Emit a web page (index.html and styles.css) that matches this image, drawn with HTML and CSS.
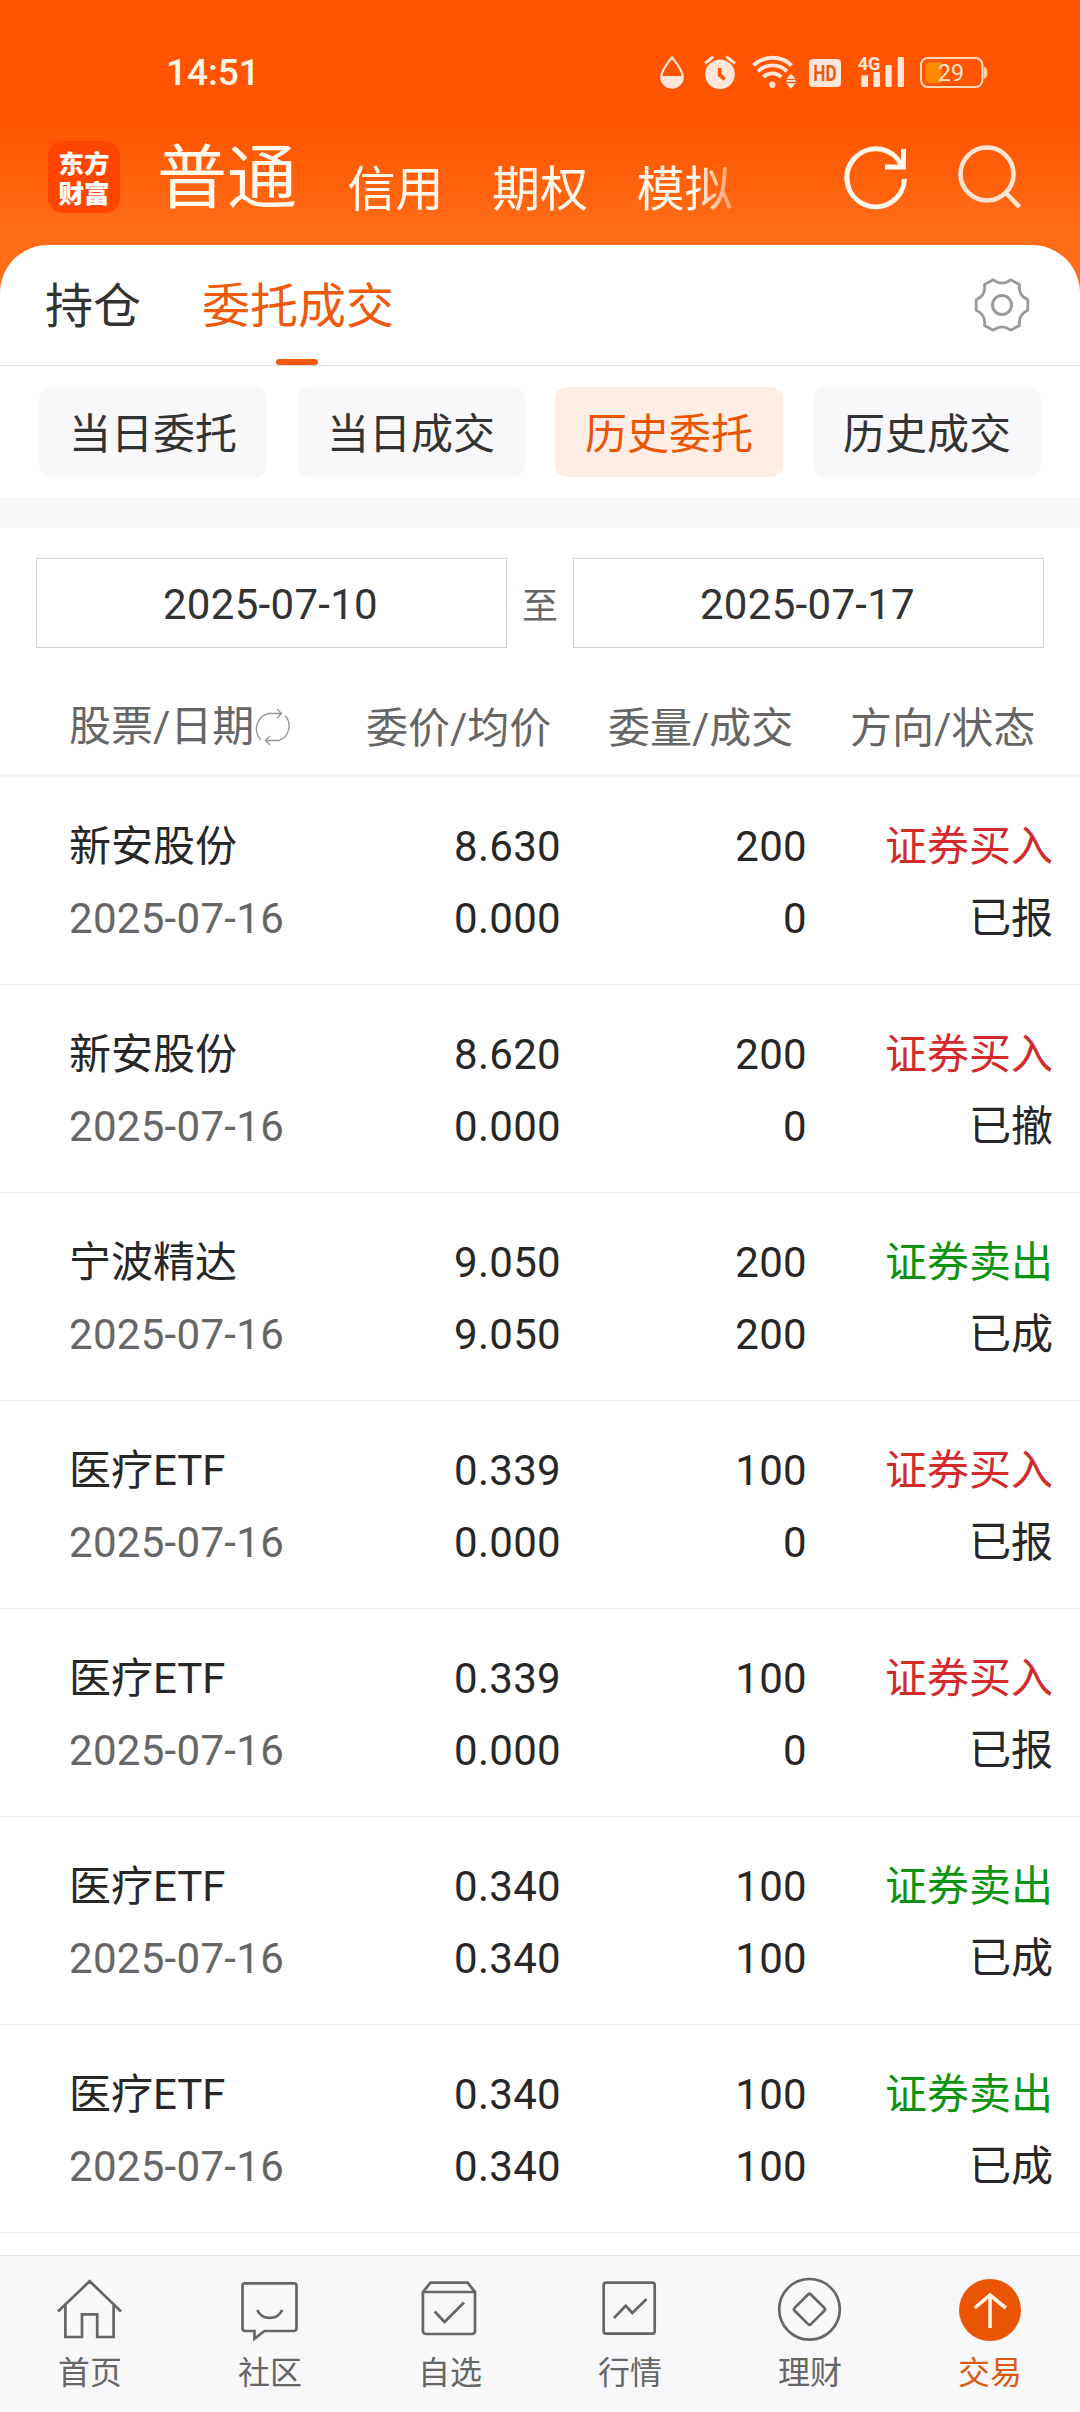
FILE: index.html
```html
<!DOCTYPE html>
<html lang="zh-CN">
<head>
<meta charset="utf-8">
<title>历史委托</title>
<link rel="stylesheet" href="styles.css">
</head>
<body>
<div class="app">
  <header class="top">
    <div class="statusbar">
      <span class="clock">14:51</span>
      <div class="status-icons">
        <svg width="30" height="36" viewBox="57 42 90 108"><path d="M96 52C86 67 64 88 64 111a32 32 0 0 0 64 0C128 88 106 67 96 52Z" fill="none" stroke="#ffe6d9" stroke-width="6.500"/><path d="M64 108h64a32 34 0 0 1-64 0Z" fill="#ffe6d9"/></svg>
        <svg width="36" height="36" viewBox="183 42 108 108"><circle cx="240" cy="103" r="44.500" fill="#ffe6d9"/><path d="M195 70l25-20M259 50l26 20" stroke="#ffe6d9" stroke-width="9"/><path d="M239 84v21l15 13" fill="none" stroke="#ff5500" stroke-width="11"/></svg>
        <svg width="47" height="36" viewBox="327 42 141 108"><g fill="none" stroke="#ffe6d9" stroke-width="11.500"><path d="M340 76a84 84 0 0 1 115 0"/><path d="M354 94a62 62 0 0 1 87 0"/><path d="M370 111a39 39 0 0 1 54 0"/></g><circle cx="397" cy="134" r="9.500" fill="#ffe6d9"/><path d="M453 101l14 16h-28ZM453 146l14-17h-28ZM439 120h28v5h-28Z" fill="#ffe6d9"/></svg>
        <svg width="37" height="36" viewBox="504 42 111 108"><rect x="507" y="57" width="96" height="84" rx="12" fill="#ffe6d9"/><text x="555" y="122" class="hd" text-anchor="middle" textLength="70" lengthAdjust="spacingAndGlyphs">HD</text></svg>
        <svg width="50" height="36" viewBox="651 42 150 108"><text x="653" y="91" class="net" textLength="68" lengthAdjust="spacingAndGlyphs">4G</text><g fill="#ffe6d9"><rect x="664" y="106" width="20" height="35" rx="3"/><rect x="700" y="96" width="20" height="45" rx="3"/><rect x="736" y="75" width="19" height="66" rx="3"/><rect x="773" y="51" width="19" height="90" rx="3"/></g></svg>
        <svg width="69" height="36" viewBox="837 42 207 108"><rect x="843" y="54" width="184" height="87" rx="20" fill="none" stroke="#ffd9b8" stroke-width="6"/><path d="M870 66h34v63h-34a15 15 0 0 1-15-15V81a15 15 0 0 1 15-15Z" fill="#ff8a00"/><path d="M1032 81a9 17 0 0 1 0 34Z" fill="#ffd0a8" stroke="#ffd0a8" stroke-width="3"/><text x="933" y="123" class="batt" text-anchor="middle" textLength="78" lengthAdjust="spacingAndGlyphs">29</text></svg>
      </div>
    </div>
    <div class="navbar">
      <div class="logo"><span>东方</span><span>财富</span></div>
      <nav class="accounts">
        <span class="current">普通</span><span>信用</span><span>期权</span><span>模拟</span>
      </nav>
      <svg class="refresh" width="72" height="72" viewBox="840 141 72 72" fill="none" stroke="#fff8ec" stroke-width="5"><path d="M904.500 179A28.800 29 0 1 1 902 166"/><path d="M903.500 149v18H885"/></svg>
      <svg class="search" width="72" height="72" viewBox="954 141 72 72" fill="none" stroke="#ffe4d2" stroke-width="4.600"><circle cx="987" cy="174" r="26.500"/><path d="M1005 192l14.500 15"/></svg>
    </div>
  </header>

  <main class="sheet">
    <div class="tabs">
      <span class="tab">持仓</span>
      <span class="tab active">委托成交</span>
      <svg class="gear" width="60" height="60" viewBox="-30 -30 60 60" fill="none" stroke="#999" stroke-linejoin="round"><path stroke-width="2.800" d="M-8.700-25.200Q0-18.500 8.700-25.200L17.500-20.400Q16-9.600 25.800-5.300V5.300Q16 9.600 17.500 20.400L8.700 25.200Q0 18.500-8.700 25.200L-17.500 20.400Q-16 9.600-25.800 5.300V-5.300Q-16-9.600-17.500-20.400Z"/><circle r="9.500" stroke-width="3"/></svg>
    </div>
    <div class="chips">
      <span class="chip">当日委托</span><span class="chip">当日成交</span><span class="chip on">历史委托</span><span class="chip">历史成交</span>
    </div>
    <div class="range">
      <span class="date">2025-07-10</span><span class="to">至</span><span class="date">2025-07-17</span>
    </div>
    <div class="thead">
      <span class="sortable">股票/日期<svg width="38" height="38" viewBox="0 0 38 38" fill="none" stroke="#999" stroke-width="1.400"><path d="M7 32A16 16 0 0 1 14 5.500H27M23 1l4.500 4.500L23 10M31 7.500A15.500 15.500 0 0 1 25 32.500H12M16 28l-4.500 4.500L16 37"/></svg></span>
      <span>委价/均价</span><span>委量/成交</span><span>方向/状态</span>
    </div>
    <div class="rows">
      <div class="row"><div>新安股份<br><i>2025-07-16</i></div><div>8.630<br>0.000</div><div>200<br>0</div><div><b class="buy">证券买入</b><br>已报</div></div>
      <div class="row"><div>新安股份<br><i>2025-07-16</i></div><div>8.620<br>0.000</div><div>200<br>0</div><div><b class="buy">证券买入</b><br>已撤</div></div>
      <div class="row"><div>宁波精达<br><i>2025-07-16</i></div><div>9.050<br>9.050</div><div>200<br>200</div><div><b class="sell">证券卖出</b><br>已成</div></div>
      <div class="row"><div>医疗ETF<br><i>2025-07-16</i></div><div>0.339<br>0.000</div><div>100<br>0</div><div><b class="buy">证券买入</b><br>已报</div></div>
      <div class="row"><div>医疗ETF<br><i>2025-07-16</i></div><div>0.339<br>0.000</div><div>100<br>0</div><div><b class="buy">证券买入</b><br>已报</div></div>
      <div class="row"><div>医疗ETF<br><i>2025-07-16</i></div><div>0.340<br>0.340</div><div>100<br>100</div><div><b class="sell">证券卖出</b><br>已成</div></div>
      <div class="row"><div>医疗ETF<br><i>2025-07-16</i></div><div>0.340<br>0.340</div><div>100<br>100</div><div><b class="sell">证券卖出</b><br>已成</div></div>
    </div>
  </main>

  <nav class="tabbar">
    <a><svg viewBox="0 0 72 72"><path d="M4 37.500L35.700 7.200L67 37.500M11.400 31.500V63H28V40.300H43.200V63H59.600V31.500"/></svg>首页</a>
    <a><svg viewBox="0 0 72 72"><path d="M11 9.300H60a2.500 2.500 0 0 1 2.500 2.500V54.500A2.500 2.500 0 0 1 60 57H30.500L20.500 64.700V57H11a2.500 2.500 0 0 1-2.500-2.500V11.800A2.500 2.500 0 0 1 11 9.300Z"/><path d="M23.200 36a13.800 13.800 0 0 0 25 0"/></svg>社区</a>
    <a><svg viewBox="0 0 72 72"><path d="M8.900 18L16.500 8.700H53.600L61 18V57a3 3 0 0 1-3 3H11.900a3 3 0 0 1-3-3ZM8.900 18H61M20.700 37.500L30.600 48L50 28.500"/></svg>自选</a>
    <a><svg viewBox="0 0 72 72"><rect x="9.700" y="8.700" width="51" height="51" rx="2.500"/><path d="M20 44L31.700 31.700L38.300 39L52.600 25"/></svg>行情</a>
    <a><svg viewBox="0 0 72 72"><circle cx="35.500" cy="35.300" r="30.300"/><rect x="24" y="23.800" width="23" height="23" rx="2" transform="rotate(45 35.500 35.300)"/></svg>理财</a>
    <a class="active"><svg viewBox="0 0 72 72"><circle class="disc" cx="36" cy="36" r="31"/><path class="arrow" d="M36 54V21M20.700 34L36 21L51.800 34"/></svg>交易</a>
  </nav>
</div>
</body>
</html>
```

FILE: styles.css
```css
* { box-sizing: border-box; }
body {
  margin: 0;
  width: 1080px;
  font-family: Roboto, "Noto Sans CJK SC", sans-serif;
  color: #333;
  background: #fff;
}
.app {
  display: flex;
  flex-direction: column;
  height: 2412px;
  overflow: hidden;
  background: linear-gradient(#ff5500 0, #ff5500 125px, #ff6c17 230px, #ff701c 300px);
}
svg { display: block; flex: none; }

.top { height: 245px; flex: none; }
.statusbar {
  display: flex;
  justify-content: space-between;
  align-items: center;
  height: 144px;
  padding: 0 92px 0 166px;
}
.clock {
  color: #fff6e6;
  font: 500 37px/1 Roboto, sans-serif;
}
.status-icons { display: flex; gap: 12px; }
.hd { font: 700 65px Roboto, sans-serif; fill: #e65a14; }
.net { font: 700 56px Roboto, sans-serif; fill: #ffe6d9; }
.batt { font: 400 74px Roboto, sans-serif; fill: #ffe2c8; }

.navbar {
  display: flex;
  height: 72px;
  margin-top: -3px;
  padding-left: 48px;
}
.logo {
  display: flex;
  flex-direction: column;
  justify-content: center;
  width: 72px;
  height: 72px;
  border-radius: 15px;
  background: #ff4600;
  color: #fff;
  font: 900 25.500px/30px "Noto Sans CJK SC", sans-serif;
  text-align: center;
}
.accounts {
  display: flex;
  align-items: flex-start;
  gap: 48.500px;
  width: 630px;
  height: 100px;
  margin-left: 37px;
  color: #fff8ec;
  font-size: 48px;
  line-height: 97px;
  -webkit-mask-image: linear-gradient(90deg, #000 538px, transparent 600px);
  mask-image: linear-gradient(90deg, #000 538px, transparent 600px);
}
.accounts .current {
  margin-right: 2px;
  font-size: 70px;
  line-height: 76px;
}
.refresh { margin-left: 53px; }
.search { margin-left: 42px; }

.sheet {
  flex: 1;
  background: #fff;
  border-radius: 48px 48px 0 0;
}
.tabs {
  display: flex;
  align-items: center;
  height: 121px;
  padding: 0 48px 0 45px;
  border-bottom: 1px solid #ddd;
  font-size: 48px;
}
.tab {
  height: 120px;
  margin-right: 61px;
  line-height: 124px;
}
.tab.active { position: relative; color: #ed5a0c; }
.tab.active::after {
  content: "";
  position: absolute;
  left: 74px;
  bottom: 0;
  width: 42px;
  height: 6px;
  border-radius: 3px;
  background: #f35a0c;
}
.gear { margin-left: auto; }

.chips {
  display: flex;
  gap: 30px;
  height: 131px;
  padding: 21px 39px 20px;
}
.chip {
  flex: 1;
  height: 90px;
  border-radius: 12px;
  background: #f8f8fa;
  font-size: 42px;
  line-height: 95px;
  text-align: center;
}
.chip.on { background: #ffeee5; color: #ea5504; }

.range {
  display: flex;
  align-items: center;
  justify-content: space-between;
  height: 182px;
  padding: 30px 36px 31px;
  border-top: 31px solid #f7f8fa;
}
.date {
  width: 471px;
  height: 90px;
  padding-right: 2px;
  border: 1px solid #d4d4d4;
  font-size: 42px;
  letter-spacing: .3px;
  line-height: 91px;
  text-align: center;
}
.to { color: #666; font-size: 36px; }

.thead {
  display: flex;
  height: 98px;
  padding-left: 69px;
  border-bottom: 3px solid #f5f6f8;
  color: #666;
  font-size: 42px;
  line-height: 100px;
}
.thead span { flex: none; width: 242px; }
.thead .sortable { display: flex; align-items: center; width: 297px; }
.thead span:last-child { width: 200px; }

.row {
  display: grid;
  grid-template-columns: 300px 192px 246px 246px;
  height: 208px;
  padding: 34px 27px 0 69px;
  border-bottom: 1px solid #eee;
  color: #272727;
  font-size: 42px;
  line-height: 72px;
  text-align: right;
}
.row div:first-child { text-align: left; }
.row div:nth-child(2), .row div:nth-child(3) { letter-spacing: .3px; }
.row i { font-style: normal; color: #666; letter-spacing: .3px; }
.row b { font-weight: 400; }
.row .buy { color: #d42a2a; }
.row .sell { color: #0a9410; }

.tabbar {
  display: flex;
  flex: none;
  height: 157px;
  padding-top: 18px;
  border-top: 1px solid #e2e2e2;
  background: #f8f8fa;
}
.tabbar a {
  display: flex;
  flex-direction: column;
  align-items: center;
  width: 180px;
  color: #666;
  font-size: 32px;
  line-height: 54px;
}
.tabbar svg {
  width: 72px;
  height: 72px;
  fill: none;
  stroke: #666;
  stroke-width: 2.700;
}
.tabbar .active { color: #dc5a14; }
.tabbar .disc { fill: #ea5504; stroke: none; }
.tabbar .arrow { stroke: #fff3e4; stroke-width: 3.600; }
```
